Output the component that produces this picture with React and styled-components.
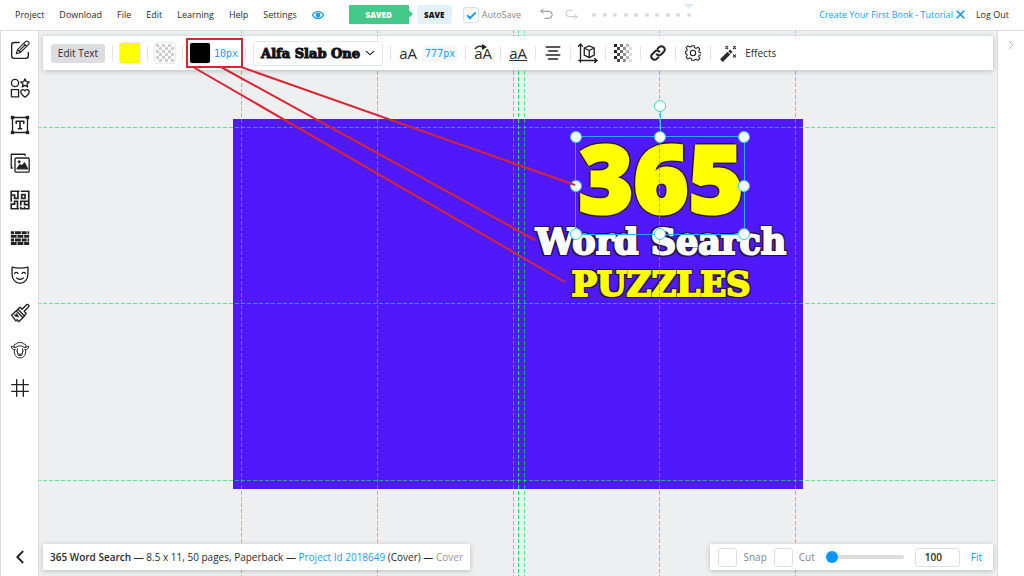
import React, { useState } from "react";
import styled, { createGlobalStyle } from "styled-components";

const GlobalStyle = createGlobalStyle`
  *, *::before, *::after {
    box-sizing: border-box;
  }
  body {
    margin: 0;
    background: #edeff1;
    color: #2b2b2b;
    font-family: "Open Sans", sans-serif;
    font-size: 10px;
  }
  button, input {
    font-family: inherit;
    font-size: inherit;
    color: inherit;
  }
`;

const MENU = ["Project", "Download", "File", "Edit", "Learning", "Help", "Settings"];

const Icon = ({ size = 20, children, ...rest }) => (
  <svg
    width={size}
    height={size}
    viewBox="0 0 24 24"
    fill="none"
    stroke="currentColor"
    strokeWidth="1.6"
    strokeLinecap="round"
    strokeLinejoin="round"
    aria-hidden="true"
    {...rest}
  >
    {children}
  </svg>
);

const tools = [
  {
    name: "Edit",
    icon: (
      <>
        <path d="M11 3H5a3 3 0 0 0-3 3v13a3 3 0 0 0 3 3h14a3 3 0 0 0 3-3v-4" />
        <path
          d="M7.500 16.500l1.500-5L18.500 2a2 2 0 0 1 3.500 3.500l-9.500 9.500zM16.500 4l3.500 3.500M9 11.500l3.500 3.500M11.500 12.500l6.500-6.500"
          strokeWidth="1.300"
        />
      </>
    ),
  },
  {
    name: "Elements",
    icon: (
      <>
        <circle cx="6" cy="6" r="4.300" />
        <path d="M18 1l1.500 3.300 3.600.4-2.700 2.400.8 3.600L18 8.900l-3.200 1.800.8-3.600-2.700-2.400 3.600-.4z" />
        <rect x="1.700" y="14" width="8.600" height="8.600" />
        <path d="M18 23c-3-2.200-5-4-5-6.200 0-3 3.600-3.700 5-1.300 1.400-2.400 5-1.700 5 1.300 0 2.200-2 4-5 6.200z" />
      </>
    ),
  },
  {
    name: "Text",
    icon: (
      <>
        <rect x="3" y="3" width="18" height="18" />
        <g fill="currentColor" stroke="none">
          <rect x="1" y="1" width="4" height="4" />
          <rect x="19" y="1" width="4" height="4" />
          <rect x="1" y="19" width="4" height="4" />
          <rect x="19" y="19" width="4" height="4" />
        </g>
        <path d="M7.500 10V7.500h9V10M12 7.500v9M10 16.500h4" strokeWidth="2" />
      </>
    ),
  },
  {
    name: "Images",
    icon: (
      <>
        <path d="M3 18H1.500V1.500H18V3" />
        <rect x="6" y="6" width="17" height="17" rx="1.500" />
        <path d="M8.500 19l3.500-5 2 2 3.500-4 3.500 7z" fill="currentColor" />
        <circle cx="11" cy="10.500" r="1" fill="currentColor" />
      </>
    ),
  },
  {
    name: "Mazes",
    icon: (
      <path
        d="M1.500 13V1.500h9M14 1.500h8.500v21H14M10 22.500H1.500V17M1.500 6h4v4M9.500 1.500V10H5.500M14 5.500V10h4V5.500h-4M22.500 13.500H13v4M1.500 17h4v-3.500H9v9M13 22v-1M17.500 13.500v4h5M17.500 22v-1"
        strokeLinecap="square"
        strokeLinejoin="miter"
        strokeWidth="2"
      />
    ),
  },
  {
    name: "Patterns",
    icon: (
      <g fill="currentColor" stroke="none">
        <path d="M1 4h4v3.500H1zM6 4h7v3.500H6zM14 4h6v3.500h-6zM21 4h2v3.500h-2z" />
        <path d="M1 8.300h7v3.500H1zM9 8.300h7v3.500H9zM17 8.300h6v3.500h-6z" />
        <path d="M1 12.600h4v3.500H1zM6 12.600h7v3.500H6zM14 12.600h6v3.500h-6zM21 12.600h2v3.500h-2z" />
        <path d="M1 16.900h7v3.500H1zM9 16.900h7v3.500H9zM17 16.900h6v3.500h-6z" />
      </g>
    ),
  },
  {
    name: "Masks",
    icon: (
      <path d="M2.500 2.500c6 1.500 13 1.500 19 0V11c0 6-4 11-9.500 11S2.500 17 2.500 11zM5.500 10c1-1.500 3-1.500 4 0M14.500 10c1-1.500 3-1.500 4 0M8 15.500c2.500 2 5.500 2 8 0" />
    ),
  },
  {
    name: "Brush",
    icon: (
      <path d="M2 14.500l7.500-7 8 8-7 7-2-2.500-1.500 1.500L2 14.500zM10 7l2-2 2.500 2.500L20 2c1.500-1 3.500 1 2.500 2.500L17 10l2.500 2.500-2 2.500M7.500 9.500l8 8M5.500 14.500l2 1.500v-3l2.500 3.500" />
    ),
  },
  {
    name: "Animals",
    icon: (
      <path
        d="M5 8c-1-2 1-3.500 2.500-3C8.500 3 11 2.500 12 3.500 13 2.500 15.500 3 16.500 5c1.500-.5 3.500 1 2.500 3M6 9L1.500 7.500C1.500 10 3.500 12 6 11.500M18 9l4.500-1.500c0 2.500-2 4.500-4.500 4M5.500 12c-1.500 5 2 9.500 6.500 9.500s8-4.500 6.500-9.500M6 9c2 0 3-2 6-2s4 2 6 2M9 10.500l-.5 3M15 10.500l.5 3M8.500 13.500l1.500 5h4l1.500-5M10.500 16.500l1.500 1 1.500-1"
        strokeWidth="1.200"
      />
    ),
  },
  { name: "Grid", icon: <path d="M8 2v20M16 2v20M2 8h20M2 16h20" /> },
];

const Checker = ({ fade }) => (
  <svg width="20" height="20" viewBox="0 0 20 20" aria-hidden="true">
    {Array.from({ length: 36 }, (_, i) => {
      const col = i % 6;
      const row = Math.floor(i / 6);
      if ((col + row) % 2) return null;
      return (
        <rect
          key={i}
          x={1 + col * 3}
          y={1 + row * 3}
          width="3"
          height="3"
          fill={fade ? "#222" : "#cfcfcf"}
          opacity={fade ? 1 - col * 0.17 : 1}
        />
      );
    })}
  </svg>
);

function App() {
  const [autoSave, setAutoSave] = useState(true);
  const [snap, setSnap] = useState(false);
  const [cut, setCut] = useState(false);
  const [zoom, setZoom] = useState("100");
  const [level, setLevel] = useState(0);

  return (
    <Page>
      <GlobalStyle />
      <Header>
        <Menu>
          {MENU.map((item) => (
            <MenuButton key={item}>{item}</MenuButton>
          ))}
          <EyeButton aria-label="Preview">
            <Icon size={12} strokeWidth="2.500">
              <path d="M1 12c5-9 17-9 22 0-5 9-17 9-22 0z" />
              <circle cx="12" cy="12" r="3.500" fill="currentColor" />
            </Icon>
          </EyeButton>
        </Menu>
        <Saved>SAVED</Saved>
        <SaveButton>SAVE</SaveButton>
        <CheckLabel $gap={3}>
          <CheckBox
            type="checkbox"
            $size={16}
            checked={autoSave}
            onChange={(e) => setAutoSave(e.target.checked)}
          />
          AutoSave
        </CheckLabel>
        <History>
          <PlainButton aria-label="Undo">
            <Icon size={13}>
              <path d="M6 2L2 6l4 4M2 6h14a6 6 0 0 1 0 13H9" />
            </Icon>
          </PlainButton>
          <PlainButton aria-label="Redo" $faint>
            <Icon size={13}>
              <path d="M18 12l4 4-4 4M22 16H8A6 6 0 0 1 8 4h6" />
            </Icon>
          </PlainButton>
        </History>
        <Steps>
          {Array.from({ length: 10 }, (_, i) => (
            <Dot key={i} $current={i === 9} />
          ))}
        </Steps>
        <Account>
          <TutorialLink href="#tutorial">
            Create Your First Book - Tutorial
          </TutorialLink>
          <PlainButton aria-label="Close tutorial" $blue>
            <Icon size={9} strokeWidth="4">
              <path d="M3 3l18 18M21 3L3 21" />
            </Icon>
          </PlainButton>
          <MenuButton>Log Out</MenuButton>
        </Account>
      </Header>
      <Workspace>
        <Sidebar>
          <ToolList>
            {tools.map((tool) => (
              <ToolButton key={tool.name} aria-label={tool.name}>
                <Icon>{tool.icon}</Icon>
              </ToolButton>
            ))}
          </ToolList>
          <ToolButton aria-label="Back">
            <Icon size={16} strokeWidth="3">
              <path d="M16 4l-8 8 8 8" />
            </Icon>
          </ToolButton>
        </Sidebar>
        <Stage>
          <Canvas>
            <Cover>
              <Title>365</Title>
              <Subtitle>Word Search</Subtitle>
              <Subtitle $yellow>PUZZLES</Subtitle>
              {[8, 144, 280, 285, 291, 426, 562].map((x) => (
                <Guide key={x} $x={x} $strong={x === 285} />
              ))}
              {[8, 184, 361].map((y) => (
                <Guide key={y} $y={y} />
              ))}
              <Selection>
                <Stem />
                <Handle $x="0%" $y="0%" />
                <Handle $x="50%" $y="0%" />
                <Handle $x="100%" $y="0%" />
                <Handle $x="0%" $y="50%" />
                <Handle $x="100%" $y="50%" />
                <Handle $x="0%" $y="100%" />
                <Handle $x="50%" $y="100%" />
                <Handle $x="100%" $y="100%" />
              </Selection>
            </Cover>
          </Canvas>
          <Toolbar>
            <EditText>Edit Text</EditText>
            <Divider />
            <Swatch $color="#ffff00" aria-label="Fill color" />
            <Divider />
            <Swatch $color="#ffffff" aria-label="Background color">
              <Checker />
            </Swatch>
            <Divider />
            <Swatch $color="#000000" aria-label="Outline color" />
            <Size>10px</Size>
            <Divider />
            <FontButton>
              Alfa Slab One
              <Icon size={10} strokeWidth="2.500">
                <path d="M3 8l9 8 9-8" />
              </Icon>
            </FontButton>
            <Divider />
            <Letters>aA</Letters>
            <Size $filled>777px</Size>
            <Divider />
            <Letters>
              aA
              <Arrow width="14" height="6" viewBox="0 0 14 6" aria-hidden="true">
                <path d="M1 5Q4 1 9 3" fill="none" stroke="#222" strokeWidth="1.500" />
                <path d="M8 0l5 3-5 3z" fill="#222" />
              </Arrow>
            </Letters>
            <Divider />
            <Letters $underline>aA</Letters>
            <Divider />
            <IconButton aria-label="Align">
              <Icon size={18} strokeWidth="2">
                <path d="M3 4h18M6 9.300h12M3 14.600h18M6 20h12" />
              </Icon>
            </IconButton>
            <Divider />
            <IconButton aria-label="Dimensions">
              <Icon size={20}>
                <path d="M3 23V1M.5 4L3 1l2.500 3M1 21h22M20 18.500l3 2.500-3 2.500" />
                <path d="M13.500 3.500l6 2.500v8.500l-6 3-6-3V6zM7.500 6l6 3 6-3M13.500 9v8.500" />
              </Icon>
            </IconButton>
            <Divider />
            <IconButton aria-label="Opacity">
              <Checker fade />
            </IconButton>
            <Divider />
            <IconButton aria-label="Link">
              <Icon size={16} strokeWidth="3">
                <path d="M10 14a5 5 0 0 0 7 0l4-4a5 5 0 0 0-7-7l-2.500 2.500M14 10a5 5 0 0 0-7 0l-4 4a5 5 0 0 0 7 7l2.500-2.500" />
              </Icon>
            </IconButton>
            <Divider />
            <IconButton aria-label="Settings">
              <Icon size={16}>
                <circle cx="12" cy="12" r="4" />
                <path d="M10 1h4l.7 3.200 2 .9 2.800-1.800 2.800 2.800-1.700 2.800.8 2 3 .7v3l-3 .8-.9 2 1.800 2.900-2.800 2.800-2.900-1.800-2 .8L14 23h-4l-.7-2.900-2-.8-2.900 1.800-2.800-2.800 1.800-2.900-.9-2-2-.8v-3l2-.7.9-2-1.800-2.800 2.800-2.800 2.900 1.800 2-.9z" />
              </Icon>
            </IconButton>
            <Divider />
            <EffectsButton>
              <Icon size={17}>
                <path d="M2 22L12.500 11.500" strokeWidth="5.500" strokeLinecap="butt" />
                <path d="M13.500 10.500l2.500-2.500" strokeWidth="5" strokeLinecap="butt" />
                <path d="M8 2l3 3M11 2L8 5M19 2l3 3M22 2l-3 3M19 14l3 3M22 14l-3 3" />
              </Icon>
              Effects
            </EffectsButton>
          </Toolbar>
          <StatusRow>
            <ProjectInfo>
              <strong>365 Word Search</strong> — 8.5 x 11, 50 pages, Paperback —{" "}
              <a href="#project">Project Id 2018649</a> (Cover) — <span>Cover</span>
            </ProjectInfo>
            <ZoomPanel>
              <CheckLabel $gap={6}>
                <CheckBox
                  type="checkbox"
                  $size={19}
                  checked={snap}
                  onChange={(e) => setSnap(e.target.checked)}
                />
                Snap
              </CheckLabel>
              <CheckLabel $gap={6}>
                <CheckBox
                  type="checkbox"
                  $size={19}
                  checked={cut}
                  onChange={(e) => setCut(e.target.checked)}
                />
                Cut
              </CheckLabel>
              <Slider
                type="range"
                aria-label="Zoom"
                value={level}
                onChange={(e) => setLevel(e.target.value)}
              />
              <ZoomInput
                aria-label="Zoom percent"
                value={zoom}
                onChange={(e) => setZoom(e.target.value)}
              />
              <PlainButton $blue>Fit</PlainButton>
            </ZoomPanel>
          </StatusRow>
        </Stage>
        <RightPanel>
          <PlainButton aria-label="Open panel" $faint>
            <Icon size={12} strokeWidth="2">
              <path d="M8 4l8 8-8 8" />
            </Icon>
          </PlainButton>
        </RightPanel>
      </Workspace>
      <Callout width="600" height="300" viewBox="0 0 600 300" aria-hidden="true">
        <rect x="187" y="39" width="55" height="28" />
        <path d="M193 67L565 282M221 67L535 240M241 67L575 185" />
      </Callout>
    </Page>
  );
}

export default App;

const Page = styled.div`
  position: relative;
  display: flex;
  flex-direction: column;
  min-height: 100vh;
  overflow: hidden;
`;

const Header = styled.header`
  display: flex;
  align-items: center;
  height: 31px;
  padding: 0 15px 1px;
  background: #fff;
  border-bottom: 1px solid #dcdddf;
  font-size: 9px;
`;

const Menu = styled.nav`
  display: flex;
  align-items: center;
  gap: 15px;
  margin-right: 25px;
`;

const PlainButton = styled.button`
  display: flex;
  align-items: center;
  padding: 0;
  border: none;
  background: none;
  color: ${(p) => (p.$blue ? "#1d9bea" : p.$faint ? "#b9bbbd" : "#77797b")};
`;

const MenuButton = styled(PlainButton)`
  color: #2b2b2b;
`;

const EyeButton = styled(PlainButton)`
  color: #1d9bea;
`;

const Saved = styled.div`
  position: relative;
  width: 60px;
  margin-right: 8px;
  background: #45c98b;
  color: #fff;
  font-size: 8px;
  font-weight: 800;
  line-height: 19px;
  text-align: center;
  &::after {
    content: "";
    position: absolute;
    left: 100%;
    top: 5px;
    border: 4px solid transparent;
    border-left-color: #45c98b;
  }
`;

const SaveButton = styled.button`
  width: 35px;
  height: 19px;
  margin-right: 11px;
  padding: 0;
  border: none;
  border-radius: 3px;
  background: #e1f2fd;
  color: #111;
  font-size: 8px;
  font-weight: 800;
`;

const CheckLabel = styled.label`
  display: flex;
  align-items: center;
  gap: ${(p) => p.$gap}px;
  color: #85878a;
`;

const CheckBox = styled.input`
  appearance: none;
  flex: none;
  width: ${(p) => p.$size}px;
  height: ${(p) => p.$size}px;
  margin: 0;
  border: 1px solid #dddfe1;
  border-radius: 3px;
  background: #fff;
  &:checked::before {
    content: "";
    display: block;
    width: 9px;
    height: 5px;
    margin: 4px 3px;
    border: solid #1d9bea;
    border-width: 0 0 2px 2px;
    transform: rotate(-45deg);
  }
`;

const History = styled.div`
  display: flex;
  gap: 12px;
  margin-left: 19px;
`;

const Steps = styled.div`
  display: flex;
  justify-content: space-between;
  width: 99px;
  margin-left: 14px;
`;

const Dot = styled.span`
  position: relative;
  width: 4px;
  height: 4px;
  border-radius: 50%;
  background: #d9dadc;
  &::before {
    content: "";
    display: ${(p) => (p.$current ? "block" : "none")};
    position: absolute;
    left: -3px;
    top: -9px;
    border: 5px solid transparent;
    border-top-color: #d9ebf3;
  }
`;

const Account = styled.div`
  display: flex;
  align-items: center;
  gap: 3px;
  margin-left: auto;
  ${MenuButton} {
    margin-left: 8px;
  }
`;

const TutorialLink = styled.a`
  color: #1d9bea;
  text-decoration: none;
`;

const Workspace = styled.div`
  display: grid;
  grid-template-columns: 39px 1fr 27px;
  flex: 1;
`;

const Sidebar = styled.aside`
  display: flex;
  flex-direction: column;
  align-items: center;
  justify-content: space-between;
  padding: 9px 0 11px;
  background: #fff;
  border-left: 1px solid #dcdddf;
  border-right: 1px solid #dcdddf;
`;

const ToolList = styled.div`
  display: flex;
  flex-direction: column;
  justify-content: space-between;
  height: 358px;
`;

const ToolButton = styled.button`
  display: flex;
  padding: 0;
  border: none;
  background: none;
  color: #222;
`;

const Stage = styled.main`
  position: relative;
  display: flex;
  flex-direction: column;
  justify-content: space-between;
  padding: 5px 4px 6px;
`;

/* the artboard sits behind the floating bars */
const Canvas = styled.div`
  position: absolute;
  inset: 0;
  display: flex;
  align-items: center;
  justify-content: center;
  padding-top: 1px;
  overflow: hidden;
`;

const Cover = styled.div`
  position: relative;
  display: flex;
  flex-direction: column;
  align-items: center;
  flex: none;
  width: 570px;
  height: 370px;
  padding: 15px 0 0 286px;
  background: #5019fb;
`;

/* hard shadows on eight sides; d is measured from the glyph edge */
const outline = (d, color) =>
  [
    [d, 0],
    [-d, 0],
    [0, d],
    [0, -d],
    [2, 2],
    [-2, 2],
    [2, -2],
    [-2, -2],
  ]
    .map(([x, y]) => `${x}px ${y}px 0 ${color}`)
    .join(", ");

const Title = styled.div`
  color: #ff0;
  font-family: "Open Sans", sans-serif;
  font-size: 94px;
  font-weight: 800;
  line-height: 86px;
  -webkit-text-stroke: 3px #ff0;
  text-shadow: ${outline(3, "#2b1a25")};
`;

const Subtitle = styled.div`
  color: ${(p) => (p.$yellow ? "#ff0" : "#fff")};
  font-family: "DejaVu Serif", serif;
  font-size: ${(p) => (p.$yellow ? 34 : 35)}px;
  font-weight: 700;
  line-height: 43px;
  white-space: nowrap;
  -webkit-text-stroke: 2px ${(p) => (p.$yellow ? "#ff0" : "#fff")};
  text-shadow: ${outline(2, "#22143c")};
`;

const Guide = styled.div`
  position: absolute;
  opacity: ${(p) => (p.$strong ? 1 : 0.7)};
  ${(p) =>
    p.$x !== undefined
      ? `left: ${p.$x}px; top: -100vh; bottom: -100vh; width: 1px;`
      : `top: ${p.$y}px; left: -100vw; right: -100vw; height: 1px;`}
  background: repeating-linear-gradient(
    ${(p) => (p.$x !== undefined ? "to bottom" : "to right")},
    #0fe564 0 4px,
    transparent 4px 6px
  );
`;

const Selection = styled.div`
  position: absolute;
  left: 342px;
  top: 17px;
  width: 170px;
  height: 99px;
  border: 1px solid #22aef0;
`;

const Handle = styled.span`
  position: absolute;
  left: ${(p) => p.$x};
  top: ${(p) => p.$y};
  width: 12px;
  height: 12px;
  margin: -6px;
  border: 1px solid #35c9ee;
  border-radius: 50%;
  background: #fff;
`;

const Stem = styled.span`
  position: absolute;
  left: 50%;
  top: -25px;
  height: 25px;
  border-left: 1px solid #35c9ee;
  &::before {
    content: "";
    position: absolute;
    left: -7px;
    top: -12px;
    width: 12px;
    height: 12px;
    border: 1px solid #35dcc0;
    border-radius: 50%;
    background: #fff;
  }
`;

const Panel = styled.div`
  position: relative;
  display: flex;
  align-items: center;
  background: #fff;
  box-shadow: 0 1px 5px rgba(0, 0, 0, 0.22);
`;

const Toolbar = styled(Panel)`
  height: 34px;
  padding: 0 8px;
`;

const EditText = styled.button`
  width: 54px;
  height: 19px;
  padding: 0;
  border: none;
  border-radius: 3px;
  background: #dcdde0;
`;

const Divider = styled.span`
  width: 1px;
  height: 15px;
  margin: 0 7px;
  background: #e3e4e6;
`;

const Swatch = styled.button`
  display: flex;
  width: 20px;
  height: 20px;
  padding: 0;
  border: none;
  border-radius: 2px;
  overflow: hidden;
  background: ${(p) => p.$color};
  box-shadow: 0 0 2px rgba(0, 0, 0, 0.3);
`;

const Size = styled.span`
  padding: 3px ${(p) => (p.$filled ? 3 : 0)}px;
  margin-left: 4px;
  border-radius: 3px;
  background: ${(p) => (p.$filled ? "#f5f7f9" : "none")};
  color: #1d9bea;
  font-family: "DejaVu Sans Mono", monospace;
  font-size: 10px;
`;

const FontButton = styled.button`
  display: flex;
  align-items: center;
  justify-content: space-between;
  width: 130px;
  height: 25px;
  padding: 0 7px;
  border: 1px solid #e6e7e9;
  border-radius: 3px;
  background: #fff;
  color: #111;
  font-family: "DejaVu Serif", serif;
  font-size: 13px;
  font-weight: 700;
  white-space: nowrap;
  -webkit-text-stroke: 1px #111;
`;

const Letters = styled.button`
  position: relative;
  width: 20px;
  padding: 0;
  border: none;
  background: none;
  font-size: 15px;
  line-height: 18px;
  text-decoration: ${(p) => (p.$underline ? "underline" : "none")};
`;

const Arrow = styled.svg`
  position: absolute;
  left: 1px;
  top: 0;
`;

const IconButton = styled.button`
  display: flex;
  align-items: center;
  justify-content: center;
  width: 20px;
  height: 20px;
  padding: 0;
  border: none;
  background: none;
  color: #222;
`;

const EffectsButton = styled.button`
  display: flex;
  align-items: center;
  gap: 8px;
  padding: 0 2px;
  border: none;
  background: none;
`;

const StatusRow = styled.footer`
  display: flex;
  justify-content: space-between;
`;

const ProjectInfo = styled(Panel)`
  display: block;
  padding: 0 7px;
  line-height: 26px;
  white-space: nowrap;
  strong {
    font-weight: 600;
  }
  a {
    color: #1d9bea;
    text-decoration: none;
  }
  span {
    color: #96989a;
  }
`;

const ZoomPanel = styled(Panel)`
  gap: 7px;
  padding: 0 11px 0 8px;
`;

const Slider = styled.input`
  appearance: none;
  width: 78px;
  height: 4px;
  margin: 0 4px;
  border-radius: 2px;
  background: #dcdcdd;
  &::-webkit-slider-thumb {
    appearance: none;
    width: 12px;
    height: 12px;
    border-radius: 50%;
    background: #0a97fb;
  }
`;

const ZoomInput = styled.input`
  width: 45px;
  height: 19px;
  margin-right: 4px;
  padding: 0 9px;
  border: 1px solid #dddfe1;
  border-radius: 3px;
  font-weight: 600;
`;

const RightPanel = styled.aside`
  padding: 8px 7px;
  background: #fff;
  border-left: 1px solid #dcdddf;
`;

const Callout = styled.svg`
  position: absolute;
  left: 0;
  top: 0;
  pointer-events: none;
  fill: none;
  stroke: #dc2431;
  stroke-width: 2;
`;
